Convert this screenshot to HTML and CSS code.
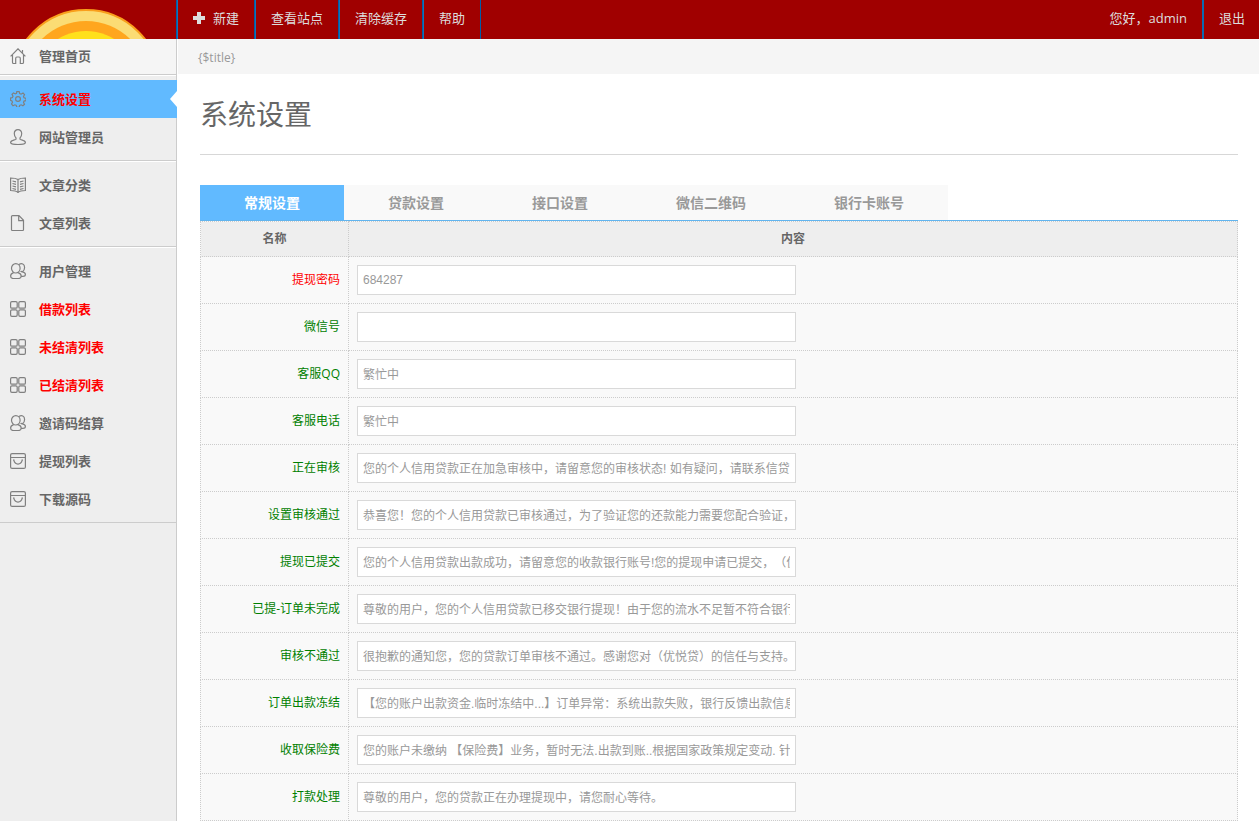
FILE: index.html
```html
<!DOCTYPE html>
<html lang="zh-CN">
<head>
<meta charset="utf-8">
<title>系统设置</title>
<link rel="stylesheet" href="styles.css">
</head>
<body>
<svg class="sprite" aria-hidden="true">
  <symbol id="i-home" viewBox="0 0 16 16"><path d="M.6 8.300 8 .8l7.400 7.500M2.500 7v7.300c0 .7.300 1.200 1 1.200h2.200V10.500c0-1 .5-1.500 1.200-1.500h2.200c.7 0 1.200.5 1.200 1.500v5h2.200c.7 0 1-.5 1-1.200V7M12.500 4.800V2"/></symbol>
  <symbol id="i-gear" viewBox="0 0 16 16"><circle cx="8" cy="8" r="2.400"/><path d="M6.800.6h2.400l.5 2 1.400.6 1.900-1.100 1.500 1.600-1 1.800.5 1.300 2 .5v2.200l-2 .6-.5 1.300 1 1.900-1.600 1.500-1.800-1-1.400.6-.5 2H6.800l-.5-2-1.400-.6-1.900 1L1.500 13l1-1.800L2 10 .5 9.400V7.100L2.400 6.600 3 5.200 2 3.400l1.500-1.500 1.800 1 1.200-.5z"/></symbol>
  <symbol id="i-user" viewBox="0 0 16 16"><path d="M8 .6c-2.200 0-3.700 1.700-3.700 4 0 2 .7 3.500 1.700 4.400v1.200c-.5.800-5.400.9-5.400 3.300 0 1.400 3 2 7.400 2s7.400-.6 7.400-2c0-2.400-4.900-2.500-5.400-3.300V9c1-.9 1.700-2.400 1.700-4.400 0-2.300-1.500-4-3.700-4z"/></symbol>
  <symbol id="i-book" viewBox="0 0 16 16"><path d="M8 2.500C6.500 1.500 3.500 1 .6 1v12.500c3 0 5.900.5 7.400 2 1.500-1.500 4.400-2 7.400-2V1C12.500 1 9.500 1.500 8 2.500zv13M2.500 4l3.500.8M2.500 6.500l3.500.8M2.500 9l3.500.8M2.500 11.500l3.500.8M13.500 4l-3.500.8M13.500 6.500l-3.500.8M13.500 9l-3.500.8M13.500 11.500l-3.500.8"/></symbol>
  <symbol id="i-page" viewBox="0 0 16 16"><path d="M2.500.6H9l4.500 4.700v9.100c0 .7-.3 1.100-1 1.100h-10c-.7 0-1-.4-1-1.100V1.600c0-.7.3-1 1-1zM8.700.8v4.800h4.700"/></symbol>
  <symbol id="i-users" viewBox="0 0 16 16"><ellipse cx="5.800" cy="5.300" rx="4.300" ry="4.700"/><path d="M3.600 9.600C1.700 10.300.6 11.300.6 13c0 1.700 1 2.500 2.800 2.500h5c1.800 0 2.800-.8 2.800-2.500 0-1.700-1.300-2.800-3.200-3.400M9 1.600c2.600-1.900 5.600-.5 5.600 2.900 0 2-1 3.600-2.200 4.400 1.800.4 3 1.200 3 2.500 0 1.200-1 1.900-2.600 1.900h-1.600M10.400 8.500l2-.2"/></symbol>
  <symbol id="i-grid" viewBox="0 0 16 16"><rect x=".6" y=".6" width="6.600" height="6.600" rx="1.300"/><rect x="8.800" y=".6" width="6.600" height="6.600" rx="1.300"/><rect x=".6" y="8.800" width="6.600" height="6.600" rx="1.300"/><rect x="8.800" y="8.800" width="6.600" height="6.600" rx="1.300"/></symbol>
  <symbol id="i-bag" viewBox="0 0 16 16"><rect x=".6" y=".6" width="14.800" height="14.800" rx="1.500"/><path d="M.6 4.500h14.800M3.800 7.200c.6 2.500 2 3.900 4.200 3.900s3.600-1.400 4.200-3.900M3 7h1.500M11.500 7H13"/></symbol>
</svg>

<header class="topbar">
  <a class="logo" href="#" aria-label="首页">
    <svg viewBox="0 0 176 39" aria-hidden="true">
      <circle cx="86" cy="84" r="74" fill="#fbdc74" stroke="#f99f1c" stroke-width="2"/>
      <circle cx="86" cy="84" r="63" fill="#ffa61e"/>
      <circle cx="86" cy="84" r="53" fill="#ffe01c"/>
    </svg>
  </a>
  <nav class="topnav">
    <a href="#"><svg class="plus" viewBox="0 0 12 12" aria-hidden="true"><path d="M4 0h4v4h4v4H8v4H4V8H0V4h4z"/></svg>新建</a>
    <a href="#">查看站点</a>
    <a href="#">清除缓存</a>
    <a href="#">帮助</a>
  </nav>
  <div class="account"><span>您好，admin</span><a href="#">退出</a></div>
</header>

<div class="layout">
  <aside class="sidebar">
    <ul class="home">
      <li><a href="#"><svg class="icon"><use href="#i-home"/></svg>管理首页</a></li>
    </ul>
    <ul>
      <li><a class="current" href="#"><svg class="icon"><use href="#i-gear"/></svg>系统设置</a></li>
      <li><a href="#"><svg class="icon"><use href="#i-user"/></svg>网站管理员</a></li>
    </ul>
    <ul>
      <li><a href="#"><svg class="icon"><use href="#i-book"/></svg>文章分类</a></li>
      <li><a href="#"><svg class="icon"><use href="#i-page"/></svg>文章列表</a></li>
    </ul>
    <ul>
      <li><a href="#"><svg class="icon"><use href="#i-users"/></svg>用户管理</a></li>
      <li><a class="hot" href="#"><svg class="icon"><use href="#i-grid"/></svg>借款列表</a></li>
      <li><a class="hot" href="#"><svg class="icon"><use href="#i-grid"/></svg>未结清列表</a></li>
      <li><a class="hot" href="#"><svg class="icon"><use href="#i-grid"/></svg>已结清列表</a></li>
      <li><a href="#"><svg class="icon"><use href="#i-users"/></svg>邀请码结算</a></li>
      <li><a href="#"><svg class="icon"><use href="#i-bag"/></svg>提现列表</a></li>
      <li><a href="#"><svg class="icon"><use href="#i-bag"/></svg>下载源码</a></li>
    </ul>
  </aside>

  <main class="main">
    <div class="crumb">{$title}</div>
    <div class="content">
      <h1>系统设置</h1>
      <nav class="tabs">
        <a class="active" href="#">常规设置</a>
        <a href="#">贷款设置</a>
        <a href="#">接口设置</a>
        <a href="#">微信二维码</a>
        <a href="#">银行卡账号</a>
      </nav>
      <table class="settings">
        <colgroup><col class="col-name"><col></colgroup>
        <thead><tr><th>名称</th><th>内容</th></tr></thead>
        <tbody>
          <tr><td><label class="alert" for="f1">提现密码</label></td><td><input id="f1" type="text" value="684287"></td></tr>
          <tr><td><label for="f2">微信号</label></td><td><input id="f2" type="text" value=""></td></tr>
          <tr><td><label for="f3">客服QQ</label></td><td><input id="f3" type="text" value="繁忙中"></td></tr>
          <tr><td><label for="f4">客服电话</label></td><td><input id="f4" type="text" value="繁忙中"></td></tr>
          <tr><td><label for="f5">正在审核</label></td><td><input id="f5" type="text" value="您的个人信用贷款正在加急审核中，请留意您的审核状态! 如有疑问，请联系信贷"></td></tr>
          <tr><td><label for="f6">设置审核通过</label></td><td><input id="f6" type="text" value="恭喜您！您的个人信用贷款已审核通过，为了验证您的还款能力需要您配合验证，"></td></tr>
          <tr><td><label for="f7">提现已提交</label></td><td><input id="f7" type="text" value="您的个人信用贷款出款成功，请留意您的收款银行账号!您的提现申请已提交，（优"></td></tr>
          <tr><td><label for="f8">已提-订单未完成</label></td><td><input id="f8" type="text" value="尊敬的用户，您的个人信用贷款已移交银行提现！由于您的流水不足暂不符合银行"></td></tr>
          <tr><td><label for="f9">审核不通过</label></td><td><input id="f9" type="text" value="很抱歉的通知您，您的贷款订单审核不通过。感谢您对（优悦贷）的信任与支持。"></td></tr>
          <tr><td><label for="f10">订单出款冻结</label></td><td><input id="f10" type="text" value="【您的账户出款资金.临时冻结中...】订单异常：系统出款失败，银行反馈出款信息"></td></tr>
          <tr><td><label for="f11">收取保险费</label></td><td><input id="f11" type="text" value="您的账户未缴纳 【保险费】业务，暂时无法.出款到账..根据国家政策规定变动. 针对"></td></tr>
          <tr><td><label for="f12">打款处理</label></td><td><input id="f12" type="text" value="尊敬的用户，您的贷款正在办理提现中，请您耐心等待。"></td></tr>
        </tbody>
      </table>
    </div>
  </main>
</div>
</body>
</html>
```
FILE: styles.css
```css
* { box-sizing: border-box; }

body {
  margin: 0;
  min-height: 100vh;
  display: flex;
  flex-direction: column;
  background: #fff;
  color: #666;
  font: 12px/20px "Open Sans", "Noto Sans CJK SC", sans-serif;
}

a { color: inherit; text-decoration: none; }
ul { margin: 0; padding: 0; list-style: none; }
.sprite { position: absolute; width: 0; height: 0; }

/* top bar */
.topbar {
  display: flex;
  height: 39px;
  background: #a00000;
  color: #ddd;
  font-size: 13px;
  line-height: 37px;
}
.logo { width: 176px; overflow: hidden; }
.logo svg { display: block; width: 176px; height: 39px; }
.topnav { display: flex; border-left: 1px solid #005ea8; }
.topnav a {
  display: flex;
  padding: 0 15px;
  border-left: 1px solid #1373b8;
  border-right: 1px solid #005ea8;
}
.plus { width: 12px; height: 12px; margin: 12px 8px 0 0; fill: #ddd; }
.account { display: flex; margin-left: auto; }
.account span { padding: 0 15px; }
.account a { padding: 0 14px 0 15px; border-left: 2px solid #0b6ab2; }

/* side menu */
.layout { display: flex; flex: 1; }
.sidebar {
  width: 177px;
  flex: none;
  background: #eee;
  border-right: 1px solid #ccc;
}
.sidebar ul {
  padding: 4px 0;
  border-top: 1px solid #fff;
  border-bottom: 1px solid #ccc;
}
.sidebar .home { padding: 0 0 2px; border-top: 0; background: #f5f5f5; }
.sidebar a {
  display: flex;
  align-items: center;
  gap: 13px;
  height: 38px;
  padding-left: 10px;
  font-size: 13px;
  font-weight: bold;
}
.sidebar .home a { height: 33px; }
.sidebar .hot { color: #f00; }
.sidebar .current {
  position: relative;
  margin-right: -1px;
  background: #61baff;
  color: #f00;
}
.current::after {
  content: "";
  position: absolute;
  right: 0;
  top: 11px;
  border: 8px solid transparent;
  border-left: 0;
  border-right: 7px solid #fff;
}
.icon {
  width: 16px;
  height: 16px;
  fill: none;
  stroke: #808080;
  stroke-width: 1.2;
}

/* page */
.main { flex: 1; min-width: 0; padding-left: 1px; }
.crumb {
  height: 35px;
  padding-left: 20px;
  background: #f5f5f5;
  color: #999;
  line-height: 38px;
}
.content { padding: 0 21px 0 22px; }
h1 {
  margin: 0 0 30px;
  padding: 20px 0;
  border-bottom: 1px solid #d7d7d7;
  font-size: 28px;
  font-weight: normal;
  line-height: 40px;
}

.tabs { display: flex; border-bottom: 1px solid #61b4ee; }
.tabs a {
  padding: 0 44px;
  background: #f9f9f9;
  color: #999;
  font-size: 14px;
  font-weight: bold;
  line-height: 35px;
}
.tabs .active { background: #61baff; color: #fff; }

.settings {
  width: 100%;
  table-layout: fixed;
  border-collapse: collapse;
  background: #f9f9f9;
}
.col-name { width: 148px; }
.settings th, .settings td { border: 1px dotted #ccc; padding: 8px; }
.settings th { height: 35px; padding: 0; background: #eee; }
.settings td:first-child { text-align: right; color: #008000; }
.settings .alert { color: #f00; }
.settings input {
  display: block;
  width: 439px;
  max-width: 100%;
  height: 30px;
  padding: 0 5px 1px;
  border: 1px solid #d9d9d9;
  border-radius: 0;
  background: #fff;
  color: #999;
  font: 12px "Liberation Sans", "Noto Sans CJK SC", sans-serif;
  text-spacing-trim: space-all;
}
```
